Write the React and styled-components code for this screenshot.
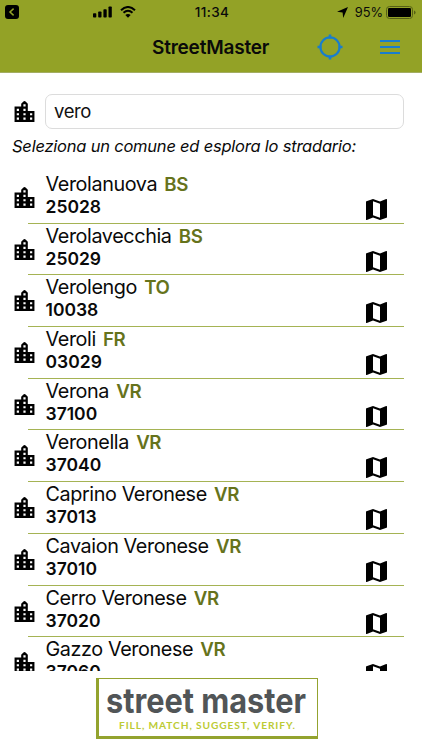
import React from "react";
import styled, { createGlobalStyle } from "styled-components";

const towns = [
    { name: "Verolanuova", prov: "BS", cap: "25028" },
    { name: "Verolavecchia", prov: "BS", cap: "25029" },
    { name: "Verolengo", prov: "TO", cap: "10038" },
    { name: "Veroli", prov: "FR", cap: "03029" },
    { name: "Verona", prov: "VR", cap: "37100" },
    { name: "Veronella", prov: "VR", cap: "37040" },
    { name: "Caprino Veronese", prov: "VR", cap: "37013" },
    { name: "Cavaion Veronese", prov: "VR", cap: "37010" },
    { name: "Cerro Veronese", prov: "VR", cap: "37020" },
    { name: "Gazzo Veronese", prov: "VR", cap: "37060" },
];

const CityIcon = () => (
    <svg width="21" height="21" viewBox="3 2 18 19">
        <path fillRule="evenodd" d="M15 11V4.6L13.2 2.6Q12 1.6 10.8 2.6L9 4.6V7H3v14h18V11h-6zM7 19H5v-2h2v2zm0-4H5v-2h2v2zm0-4H5V9h2v2zm6 8h-2v-2h2v2zm0-4h-2v-2h2v2zm0-4h-2V9h2v2zm0-4h-2V5h2v2zm6 12h-2v-2h2v2zm0-4h-2v-2h2v2z" />
    </svg>
);

const MapIcon = () => (
    <svg width="21" height="21" viewBox="3 3 18 18">
        <path d="M20.5 3l-.16.03L15 5.1 9 3 3.36 4.9c-.21.07-.36.25-.36.48V20.5c0 .28.22.5.5.5l.16-.03L9 18.9l6 2.1 5.64-1.9c.21-.07.36-.25.36-.48V3.5c0-.28-.22-.5-.5-.5zM15 19l-6-2.11V5l6 2.11V19z" />
    </svg>
);

const BackIcon = () => (
    <svg width="14" height="14" viewBox="0 0 14 14">
        <rect width="14" height="14" rx="3" />
        <path d="M8.6 3.6L5 7l3.6 3.4" fill="none" stroke="#93a226" strokeWidth="1.5" />
    </svg>
);

const SignalIcon = () => (
    <svg width="19" height="12" viewBox="0 0 19 12">
        <rect x="0" y="7.3" width="3.3" height="4.2" rx=".8" />
        <rect x="5.2" y="5.5" width="3.3" height="6" rx=".8" />
        <rect x="10.4" y="3.2" width="3.3" height="8.3" rx=".8" />
        <rect x="15.5" y=".5" width="3.3" height="11" rx=".8" />
    </svg>
);

const WifiIcon = () => (
    <svg width="16" height="12" viewBox="0 0 16 12">
        <path d="M1 4.2Q8-2.2 15 4.2M3.5 6.8q4.5-4 9 0" fill="none" stroke="#000" strokeWidth="2" />
        <path d="M8 11.8L5.3 9.1q2.7-2.3 5.4 0z" />
    </svg>
);

const ArrowIcon = () => (
    <svg width="11" height="11" viewBox="0 0 11 11">
        <path d="M11 0L6.2 11 5.6 5.4 0 4.8z" />
    </svg>
);

const BatteryIcon = () => (
    <svg width="30" height="13" viewBox="0 0 30 13">
        <rect x=".5" y=".5" width="26" height="12" rx="3" fill="none" stroke="#566016" />
        <rect x="2" y="2" width="23" height="9" rx="1.2" />
        <path d="M28 4.5q1.6.5 1.6 2T28 8.5z" fill="#566016" />
    </svg>
);

const LocateIcon = () => (
    <svg width="26" height="26" viewBox="0 0 26 26" fill="none" stroke="#187dcd">
        <circle cx="13" cy="13" r="9.6" strokeWidth="2.2" />
        <path d="M13 .5v4M13 21.5v4M.5 13h4M21.5 13h4" strokeWidth="2.6" />
    </svg>
);

const MenuIcon = () => (
    <svg width="20" height="14" viewBox="0 0 20 14" fill="#187dcd">
        <rect y="0" width="20" height="2" />
        <rect y="6" width="20" height="2" />
        <rect y="12" width="20" height="2" />
    </svg>
);

const Logo = () => (
    <svg width="218" height="56" viewBox="0 0 218 56">
        <text x="7" y="33.5" textLength="200" lengthAdjust="spacingAndGlyphs" fontFamily="Inter, sans-serif" fontWeight="700" fontSize="35" fill="#515557">street master</text>
        <text x="20" y="50" textLength="176" fontFamily="Lato, sans-serif" fontWeight="700" fontSize="10.2" fill="#bccb35">FILL, MATCH, SUGGEST, VERIFY.</text>
    </svg>
);

function App() {
    return (
        <>
            <GlobalStyle />
            <Screen>
                <Header>
                    <StatusBar>
                        <StatusLeft>
                            <BackIcon />
                            <Signal>
                                <SignalIcon />
                                <WifiIcon />
                            </Signal>
                        </StatusLeft>
                        <Clock>11:34</Clock>
                        <StatusRight>
                            <ArrowIcon />
                            <Percent>95%</Percent>
                            <BatteryIcon />
                        </StatusRight>
                    </StatusBar>
                    <NavBar>
                        <Title>StreetMaster</Title>
                        <NavButton $gap={37.5}><LocateIcon /></NavButton>
                        <NavButton $gap={22}><MenuIcon /></NavButton>
                    </NavBar>
                </Header>
                <SearchRow>
                    <CityIcon />
                    <SearchInput defaultValue="vero" />
                </SearchRow>
                <Hint>Seleziona un comune ed esplora lo stradario:</Hint>
                <TownList>
                    {towns.map((town) => (
                        <TownRow key={town.cap}>
                            <TownIcon><CityIcon /></TownIcon>
                            <TownInfo>
                                <TownName>{town.name}<Province>{town.prov}</Province></TownName>
                                <PostCode>{town.cap}</PostCode>
                            </TownInfo>
                            <MapButton><MapIcon /></MapButton>
                        </TownRow>
                    ))}
                </TownList>
                <Footer>
                    <Banner><Logo /></Banner>
                </Footer>
            </Screen>
        </>
    );
}

export default App;

const GlobalStyle = createGlobalStyle`
  * {
    box-sizing: border-box;
  }

  body {
    margin: 0;
    background: #fff;
    font-family: Inter, "Liberation Sans", sans-serif;
    color: #0a0a0a;
  }

  svg {
    display: block;
    flex-shrink: 0;
  }
`;

const Screen = styled.div`
  display: flex;
  flex-direction: column;
  height: 750px;
  width: 422px;
  overflow: hidden;
`;

const Header = styled.header`
  height: 73px;
  flex-shrink: 0;
  background: #93a226;
  border-bottom: 1px solid #a3ad62;
`;

const StatusBar = styled.div`
  display: grid;
  grid-template-columns: 1fr auto 1fr;
  align-items: center;
  height: 24px;
  padding: 0 6px 0 5px;
`;

const StatusLeft = styled.div`
  display: flex;
  align-items: center;
`;

const Signal = styled.div`
  display: flex;
  align-items: center;
  gap: 8px;
  margin-left: 74px;
`;

const Clock = styled.div`
  padding-left: 3px;
  font-size: 13.5px;
  font-weight: 500;
  letter-spacing: 0.4px;
`;

const StatusRight = styled.div`
  display: flex;
  align-items: center;
  justify-content: flex-end;
`;

const Percent = styled.span`
  margin: 0 3px 0 7px;
  font-size: 12.8px;
`;

const NavBar = styled.nav`
  display: flex;
  align-items: center;
  height: 46px;
`;

const Title = styled.h1`
  flex: 1;
  margin: 0;
  padding: 1px 0 0 152px;
  font-size: 19px;
  font-weight: 600;
  letter-spacing: -0.2px;
`;

const NavButton = styled.button`
  padding: 0;
  border: 0;
  background: none;
  margin-right: ${(p) => p.$gap}px;
`;

const SearchRow = styled.div`
  display: flex;
  align-items: center;
  gap: 10px;
  margin: 21px 18px 0 14px;
`;

const SearchInput = styled.input`
  flex: 1;
  min-width: 0;
  height: 35px;
  padding: 0 8px 2px;
  border: 1px solid #dcdcdc;
  border-radius: 7px;
  font: 18.5px Inter, sans-serif;
  letter-spacing: -0.4px;
  color: #111;
  outline: none;
`;

const Hint = styled.p`
  margin: 6px 0 0 12px;
  line-height: 22px;
  font-size: 16.5px;
  font-style: italic;
  letter-spacing: -0.22px;
  white-space: nowrap;
`;

const TownList = styled.ul`
  height: 499px;
  flex-shrink: 0;
  margin: 15px 0 0;
  padding: 0;
  list-style: none;
  overflow: hidden;
`;

const TownRow = styled.li`
  display: flex;
  height: 51.7px;
  margin-right: 18px;
  background: linear-gradient(#a5b353, #a5b353) 28px 100% / 100% 1px no-repeat;
`;

const TownIcon = styled.div`
  width: 45.5px;
  padding: 15px 0 0 14px;
`;

const TownInfo = styled.div`
  flex: 1;
`;

const TownName = styled.div`
  height: 24px;
  line-height: 25px;
  font-size: 19.8px;
  letter-spacing: -0.4px;
`;

const Province = styled.span`
  margin-left: 7.2px;
  font-size: 18.7px;
  font-weight: 600;
  color: #66731c;
`;

const PostCode = styled.div`
  line-height: 22px;
  font-size: 17.5px;
  font-weight: 600;
`;

const MapButton = styled.div`
  padding: 27px 17px 0 0;
`;

const Footer = styled.footer`
  display: flex;
  justify-content: center;
  padding: 7px 8px 0 0;
`;

const Banner = styled.div`
  width: 222px;
  height: 61px;
  border: solid #93a32f;
  border-width: 1px 1px 3px 3px;
`;
